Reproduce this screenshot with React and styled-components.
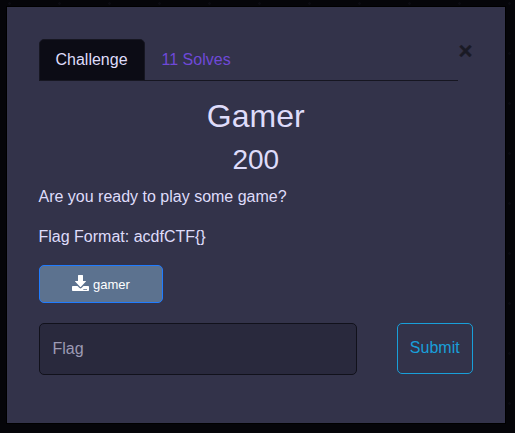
import React from 'react';
import styled, { createGlobalStyle } from 'styled-components';

const GlobalStyle = createGlobalStyle`
  *, *::before, *::after { box-sizing: border-box; }
  body {
    margin: 0;
    background: #050509;
    background-image: radial-gradient(circle at 9.5px 3.5px, #0b0b11 1px, transparent 1.6px);
    background-size: 50px 50px;
    font-family: "Liberation Sans", Arial, sans-serif;
    font-size: 16px;
    line-height: 24px;
    color: #dfdcfa;
  }
  button, input { font: inherit; }
`;

const Modal = styled.main`
  width: 498px;
  height: 416px;
  margin: 7px;
  padding: 32px 32px 32px 31.5px;
  background: #33334a;
  box-shadow: 0 0 0 1px #000;
`;

const Header = styled.header`
  display: flex;
  align-items: flex-start;
`;

const Tabs = styled.nav`
  display: flex;
  width: 419px;
  height: 42px;
  border-bottom: 1px solid #161621;
`;

const Tab = styled.button`
  height: 42px;
  padding: 0 16px;
  border: 1px solid ${(p) => (p.$active ? '#171722' : 'transparent')};
  border-radius: 5px 5px 0 0;
  background: ${(p) => (p.$active ? '#0c0c15' : 'transparent')};
  color: ${(p) => (p.$active ? '#dfdcfa' : '#6f49d8')};
`;

const Close = styled.button`
  width: 15px;
  height: 24px;
  margin-left: 0.5px;
  padding: 0;
  border: 0;
  background: none;
  color: #1a1a25;
  font-size: 24px;
  font-weight: 700;
  line-height: 24px;
  -webkit-text-stroke: 0.3px #1a1a25;
`;

const Title = styled.h2`
  margin: 16px 0 0;
  font-size: 32px;
  font-weight: 400;
  line-height: 38px;
  text-align: center;
`;

const Points = styled.h3`
  margin: 8px 0 0;
  font-size: 28px;
  font-weight: 400;
  line-height: 34px;
  text-align: center;
`;

const Description = styled.p`
  margin: 8px 0 16px;
`;

const FileButton = styled.button`
  display: flex;
  align-items: center;
  justify-content: center;
  gap: 4px;
  width: 124px;
  height: 38px;
  padding: 0 0 0 1px;
  border: 1px solid #207cff;
  border-radius: 5px;
  background: #5c728f;
  color: #fff;

  small { padding-top: 2px; font-size: 13px; line-height: 20px; }
`;

const DownloadIcon = styled.svg`
  width: 17px;
  height: 17px;
  margin-top: -2px;
  fill: currentColor;
`;

const FlagForm = styled.form`
  display: flex;
  justify-content: space-between;
  margin-top: 20px;
`;

const FlagInput = styled.input`
  width: 318px;
  height: 52px;
  padding: 0 13px;
  border: 1px solid #11111b;
  border-radius: 5px;
  background: #29293d;
  color: #dfdcfa;

  &::placeholder { color: #9c9ab4; opacity: 1; }
`;

const Submit = styled.button`
  width: 76px;
  height: 51px;
  padding: 0 0.5px 2px 0;
  border: 1px solid #199fd9;
  border-radius: 5px;
  background: transparent;
  color: #199fd9;
`;

export default function App() {
  return (
    <>
      <GlobalStyle />
      <Modal>
        <Header>
          <Tabs>
            <Tab type="button" $active>Challenge</Tab>
            <Tab type="button">11 Solves</Tab>
          </Tabs>
          <Close type="button" aria-label="Close">×</Close>
        </Header>
        <Title>Gamer</Title>
        <Points>200</Points>
        <Description>Are you ready to play some game?</Description>
        <Description>Flag Format: acdfCTF{'{}'}</Description>
        <FileButton type="button">
          <DownloadIcon viewBox="0 0 17 17" aria-hidden="true">
            <path d="M6.5 0h4q.5 0 .5.5V6h2.6q.7.1.3.6L9 11.7q-.5.4-1 0L3.1 6.6Q2.7 6.1 3.4 6H6V.5q0-.5.5-.5Z" />
            <path fillRule="evenodd" d="M.8 11h4.700l2 2q1 .8 2 0l2-2h4.700q.8 0 .8.8v3.400q0 .8-.8.8H.8q-.8 0-.8-.8v-3.400Q0 11 .8 11ZM11.300 14v.8h3.700V14Z" />
          </DownloadIcon>
          <small>gamer</small>
        </FileButton>
        <FlagForm>
          <FlagInput placeholder="Flag" aria-label="Flag" />
          <Submit type="button">Submit</Submit>
        </FlagForm>
      </Modal>
    </>
  );
}
